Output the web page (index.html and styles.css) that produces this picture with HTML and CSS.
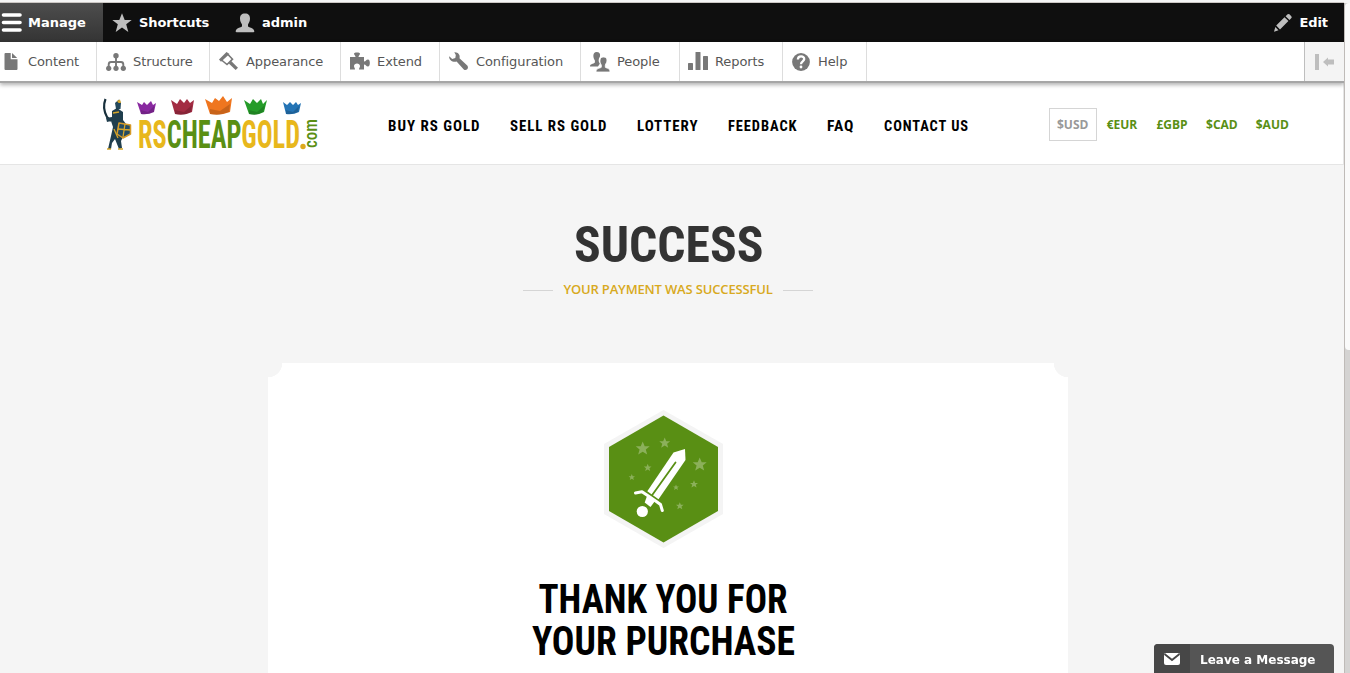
FILE: index.html
```html
<!DOCTYPE html>
<html lang="en">
<head>
<meta charset="utf-8">
<title>Success | RSCheapGold</title>
<link rel="stylesheet" href="styles.css">
</head>
<body>
<div class="window">
<div class="page">
  <nav class="toolbar">
    <a class="tab tab-manage"><svg width="20" height="20" fill="none" stroke="#fff" stroke-linecap="round"><path d="M2.500 2H19M2.500 9.500H19M2.500 17H19" stroke-width="3.600"/></svg>Manage</a>
    <a class="tab tab-shortcuts"><svg width="20" height="20" fill="#bebebe"><path d="M10 .3 12.700 7H19.700L14.200 11.300 16.300 19 10 14.600 3.700 19 5.800 11.300.3 7H7.300Z"/></svg>Shortcuts</a>
    <a class="tab tab-admin"><svg width="20" height="20" fill="#bebebe"><path d="M10 .5C13.500.5 15 2.500 15 5.500 15 8.500 13.800 9.500 13 11.500V13.500C15.500 15 19 15 19.300 18.500 19.200 19.200 18.500 19.200 18.500 19.200H1.500S.8 19.200.7 18.500C1 15 4.500 15 7 13.500V11.500C6.200 9.500 5 8.500 5 5.500 5 2.500 6.500.5 10 .5Z"/></svg>admin</a>
    <a class="tab tab-edit"><svg width="20" height="20" fill="#bebebe"><path d="M1 18.700 2.300 14 5.500 17.300ZM3.200 12.500 11.500 4.200 15.400 8.100 7 16.400ZM12.600 3.200 14.600 1.300Q15.500.5 16.400 1.300L18.300 3.200Q19.200 4.100 18.400 5L16.500 7.100Z"/></svg>Edit</a>
  </nav>
  <nav class="tray">
    <a class="item item-content"><svg width="20" height="20" fill="#787878"><path d="M4.500 1H9.700V7.300H16.500V16.700Q16.500 18 15.500 18H4.500Q3.500 18 3.500 17V2Q3.500 1 4.500 1ZM11 1 16.200 6H11Z"/></svg>Content</a>
    <a class="item item-structure"><svg width="20" height="20" fill="#787878"><circle cx="10" cy="3.800" r="2.700"/><circle cx="2.700" cy="16.300" r="2.600"/><circle cx="10" cy="16.300" r="2.600"/><circle cx="17.300" cy="16.300" r="2.600"/><path d="M10 4V16M2.700 16V12.500Q2.700 10 5 10H15Q17.300 10 17.300 12.500V16" fill="none" stroke="#787878" stroke-width="1.900"/></svg>Structure</a>
    <a class="item item-appearance"><svg width="20" height="20" fill="#787878"><path d="M7.500 0 10.500 2 2 9.800 0 7.500Z"/><path d="M9 2.500 13.500 7.200 8 12.500 2.500 8" fill="none" stroke="#787878" stroke-width="1.600"/><path d="M11 10.300 17.800 16.900" stroke="#787878" stroke-width="3.400"/></svg>Appearance</a>
    <a class="item item-extend"><svg width="20" height="20" fill="#787878"><path d="M0 5H5.500C5.500 3.500 4 3 4 1.500 4 0 10 0 10 1.500 10 3 8.500 3.500 8.500 5H14V9.500C16 9.500 16 7.500 18 7.500 20.500 7.500 20.500 14.500 18 14.500 16 14.500 16 12.500 14 12.500V17.500H9C9 16 10 15.500 10 14 10 10.500 4 10.500 4 14 4 15.500 5 16 5 17.500H0Z"/></svg>Extend</a>
    <a class="item item-configuration"><svg width="20" height="20"><path d="M5.300.2C9-.2 11.500 3 10.500 6.300L18.500 13.800Q19.500 15 18.500 17 16.600 18.800 14.800 17.500L7.600 9.600C4 10.500-.3 8.500.2 4.300L3.200 6.900 6.300 6 6.800 3Z" fill="#787878"/></svg>Configuration</a>
    <a class="item item-people"><svg width="20" height="20" fill="#787878"><path d="M6.500 0C9.500 0 10.500 1.600 10 4.300 9.700 5.700 8.700 6 8.700 9.300L9.800 11.800 8 14.500H0C0 11.500 3.500 12.300 4.900 10.500V8.500C2.800 5.500 2.500 0 6.500 0Z"/><path d="M13.300 5C17 5 17.500 8 16.500 10.500L15.300 13V15.300C17 16.500 20 16 20 20H6C6 16 9.500 16.500 11.300 15.300V13C9.500 10.500 9 5 13.300 5Z" stroke="#fff" stroke-width=".8"/></svg>People</a>
    <a class="item item-reports"><svg width="20" height="20" fill="#787878"><rect y="11" width="5" height="7" rx=".6"/><rect x="7.500" width="5" height="18" rx=".6"/><rect x="15" y="4" width="5" height="14" rx=".6"/></svg>Reports</a>
    <a class="item item-help"><svg width="20" height="20"><circle cx="10" cy="10" r="8.900" fill="#787878"/><path d="M6.900 7.500C6.900 3.400 13.500 3.500 13.200 7.200 13 9.500 10 9.300 10 12.300" fill="none" stroke="#fff" stroke-width="2.300"/><circle cx="10" cy="15" r="1.400" fill="#fff"/></svg>Help</a>
    <a class="orient"><svg width="20" height="16" fill="#bebebe"><path d="M0 0H4V16H0ZM8 8 13 3.500V5.500H19V10.500H13V12.500Z"/></svg></a>
  </nav>

  <header class="header">
    <svg class="logo" width="220" height="60" viewBox="100 94 220 60">
      <g stroke-linejoin="round">
        <path d="M105.500 99Q102 108 107 117L111 121" fill="none" stroke="#18303c" stroke-width="2.200"/>
        <path d="M115 103 119 99.500 121 103 120.500 109 116 109Z" fill="#24485b"/>
        <path d="M117 101 120 99.500 121 103 118.500 103Z" fill="#d6a62a"/>
        <path d="M112 111 117 108 123 112 123 120 126 124 123 130 123 137 121 141 122 148 119 149 115 139 112 143 111 149 108 149 111 136 113 127 111 121 107 122 106 118 112 117Z" fill="#203e4d"/>
        <path d="M119 123 130.500 125 130.500 134 123 138 117 134Z" fill="#244c63" stroke="#d69b29" stroke-width="1.500"/>
        <path d="M118 129 130 130M125 124 123 137M113 113 119 112M114 129 118 138M107 149H111M118 149H123" fill="none" stroke="#d6a62a" stroke-width="1.300"/>
      </g>
      <path d="M137 102 142 105 144 102 147 105 151 101 153 105 156 103 154 112Q148 115 141 114Z" fill="#8929a0"/>
      <path d="M171 100 177 104 180 99 184 103 187 99 190 103 194 100 192 112Q184 116 175 114Z" fill="#a32c43"/>
      <path d="M205 99 212 103 215 98 219 101 223 96 227 102 232 98 230 112Q220 116 210 114Z" fill="#ef761f"/>
      <path d="M244 100 250 104 253 99 257 103 261 99 263 104 267 100 264 112Q257 116 249 114Z" fill="#259c29"/>
      <path d="M283 102 287 105 290 102 293 105 296 102 298 105 301 103 299 112Q293 115 286 114Z" fill="#2474b5"/>
      <path d="M141 110 148 112 154 106 154 112Q147 115 141 114ZM175 110 184 112 192 105 191 112 184 115 175 114ZM210 109 220 111 230 104 229 112 219 115 210 114ZM249 110 257 112 265 105 263 112 256 115 249 114ZM286 110 293 112 299 106 298 112 292 114 286 114Z" fill="#000" opacity=".16"/>
      <text class="logo-text" x="138" y="147.500" textLength="162" lengthAdjust="spacingAndGlyphs"><tspan class="gold">RS</tspan><tspan class="green">CHEAP</tspan><tspan class="gold">GOLD</tspan></text>
      <circle cx="303" cy="146.500" r="2.700" fill="#dda91b"/>
      <text class="logo-com" transform="translate(317 148) rotate(-90)" textLength="29" lengthAdjust="spacingAndGlyphs">com</text>
    </svg>
    <nav class="menu">
      <svg width="92" height="20"><text y="16" textLength="92.500" lengthAdjust="spacingAndGlyphs">BUY RS GOLD</text></svg>
      <svg width="97" height="20"><text y="16" textLength="97.500" lengthAdjust="spacingAndGlyphs">SELL RS GOLD</text></svg>
      <svg width="61" height="20"><text y="16" textLength="61.500" lengthAdjust="spacingAndGlyphs">LOTTERY</text></svg>
      <svg width="69" height="20"><text y="16" textLength="69.500" lengthAdjust="spacingAndGlyphs">FEEDBACK</text></svg>
      <svg width="27" height="20"><text y="16" textLength="27.500" lengthAdjust="spacingAndGlyphs">FAQ</text></svg>
      <svg width="85" height="20"><text y="16" textLength="85" lengthAdjust="spacingAndGlyphs">CONTACT US</text></svg>
    </nav>
    <div class="currencies">
      <a class="currency active">$USD</a><a class="currency">€EUR</a><a class="currency">£GBP</a><a class="currency">$CAD</a><a class="currency">$AUD</a>
    </div>
  </header>

  <main class="main">
    <svg class="title" width="190" height="50"><text x="0" y="43" textLength="189.500" lengthAdjust="spacingAndGlyphs">SUCCESS</text></svg>
    <p class="subtitle"><span>YOUR PAYMENT WAS SUCCESSFUL</span></p>
    <section class="card">
      <svg class="badge" width="120" height="140" viewBox="603 409 120 140">
        <path d="M663.500 410 723 444V514L663.500 548 604 514V444Z" fill="#f4f4f4"/>
        <path d="M663.500 415.500 718 447V511L663.500 542.500 609 511V447Z" fill="#598f14"/>
        <defs><path id="star" d="M0-7 2-2.300 7-2.200 3.100 1 4.500 6 0 3.300-4.500 6-3.100 1-7-2.200-2-2.300Z"/></defs>
        <g fill="#8bb05a">
          <use href="#star" transform="translate(642.700 448.500)"/>
          <use href="#star" transform="translate(664.700 443) scale(.78)"/>
          <use href="#star" transform="translate(699.700 464.500)"/>
          <use href="#star" transform="translate(647.700 467.700) scale(.55)"/>
          <use href="#star" transform="translate(631.800 477.200) scale(.45)"/>
          <use href="#star" transform="translate(676 487.400) scale(.42)"/>
          <use href="#star" transform="translate(694 484.200) scale(.57)"/>
          <use href="#star" transform="translate(679.800 506) scale(.55)"/>
        </g>
        <path d="M685 449 673.500 452.500 647.300 491.300 658.500 499.300 685.500 460Z" fill="#fff"/>
        <path d="M675.500 462.500 651.500 496" stroke="#598f14" stroke-width="1.800" stroke-linecap="round"/>
        <path d="M635.500 493 642 491.700 648 495.800 656 501.200 660.500 504.500 662.300 510.500" fill="none" stroke="#fff" stroke-width="3" stroke-linecap="round" stroke-linejoin="round"/>
        <path d="M647 496 644.700 502.500 650.500 507 655 501Z" fill="#fff"/>
        <circle cx="642.300" cy="511.500" r="5.600" fill="#fff"/>
      </svg>
      <svg class="thanks" width="266" height="90"><text x="8.500" y="35" textLength="249" lengthAdjust="spacingAndGlyphs">THANK YOU FOR</text><text x="2" y="77" textLength="263" lengthAdjust="spacingAndGlyphs">YOUR PURCHASE</text></svg>
    </section>
  </main>
</div>
<div class="scrollbar"><div class="thumb"></div></div>
</div>
<div class="chat"><span class="chat-icon"><svg width="16" height="12"><rect width="16" height="12" rx="2" fill="#fff"/><path d="M.5 1 8 7 15.500 1" fill="none" stroke="#474747" stroke-width="1.900"/></svg></span><span class="chat-label">Leave a Message</span></div>
</body>
</html>
```
FILE: styles.css
```css
* { box-sizing: border-box; }
body { margin: 0; height: 673px; overflow: hidden; background: #f5f5f5; font-family: "DejaVu Sans", sans-serif; font-size: 13px; }
svg { display: block; flex: none; overflow: visible; }
.window { display: flex; height: 673px; padding-top: 2px; }
.page { width: 1344px; height: 671px; border-top: 1px solid #cbc7c4; overflow: hidden; }

.toolbar { display: flex; height: 39px; background: #0f0f0f; color: #fff; font-weight: bold; }
.tab { display: flex; align-items: center; gap: 7px; height: 39px; }
.tab-manage { width: 103px; padding-left: 1px; background: linear-gradient(#4d4d4d, #343434); }
.tab-shortcuts { width: 123px; padding-left: 9px; letter-spacing: -.1px; }
.tab-admin { padding-left: 9px; }
.tab-edit { margin-left: auto; padding-right: 16px; letter-spacing: -.1px; }

.tray { position: relative; display: flex; height: 41px; background: #fff; border-bottom: 2px solid #a6a6a6; box-shadow: 0 2px 4px rgba(0, 0, 0, .3); color: #565656; letter-spacing: -.08px; }
.item { display: flex; align-items: center; gap: 7px; padding-left: 9px; border-right: 1px solid #ddd; white-space: nowrap; }
.item-content { width: 97px; padding-left: 1px; }
.item-structure { width: 113px; }
.item-appearance { width: 131px; }
.item-extend { width: 99px; }
.item-configuration { width: 141px; }
.item-people { width: 99px; }
.item-reports { width: 103px; padding-left: 8px; }
.item-help { width: 84px; padding-left: 8px; }
.orient { display: flex; align-items: center; width: 40px; margin-left: auto; padding-left: 10px; background: #f4f4f4; border-left: 1px solid #bebebe; }

.header { display: flex; height: 82px; padding-left: 100px; background: #fff; border-bottom: 1px solid #e5e5e5; border-right: 1px solid #e5e5e5; }
.logo { margin-top: 11px; }
.logo-text { font: bold 38px "Roboto Condensed", Roboto, sans-serif; }
.gold { fill: #e8b71c; }
.green { fill: #5a8f14; }
.logo-com { font: 500 18px "Roboto Condensed", Roboto, sans-serif; fill: #5a8f14; }
.menu { display: flex; gap: 30px; margin: 32px 0 0 68px; font: bold 15.500px "Roboto Condensed", Roboto, sans-serif; letter-spacing: 1px; }
.currencies { display: flex; gap: 1.700px; margin: 25px 0 0 80px; }
.currency { width: 48px; height: 33px; padding: 0 7px; border: 1px solid transparent; color: #598f14; font: bold 12px/31px "Open Sans", sans-serif; }
.currency.active { border-color: #d5d5d5; color: #999; }

.main { display: flex; flex-direction: column; align-items: center; padding-top: 54px; }
.title { margin-right: 7px; font: bold 50px "Roboto Condensed", Roboto, sans-serif; fill: #333; }
.subtitle { display: flex; align-items: center; gap: 10px; margin: 10px 8px 0 0; height: 20px; color: #d8a920; font: 600 13px/20px "Open Sans", sans-serif; letter-spacing: -.16px; white-space: nowrap; }
.subtitle::before, .subtitle::after { content: ""; width: 30px; height: 1px; margin-top: 2px; background: #d5d5d5; }
.card { display: flex; flex-direction: column; align-items: center; width: 800px; height: 400px; margin: 64px 8px 0 0; padding: 46px 10px 0 0; background: radial-gradient(circle at 0 0, #f5f5f5 14px, #fff 14.500px) left / 50% 100% no-repeat, radial-gradient(circle at 100% 0, #f5f5f5 14px, #fff 14.500px) right / 50% 100% no-repeat; }
.thanks { margin-top: 29px; font: bold 40px "Roboto Condensed", Roboto, sans-serif; fill: #000; }

.scrollbar { width: 6px; height: 671px; margin-top: 1px; background: #d4d3d2; border-left: 1px solid #bfbbb8; }
.thumb { height: 347px; background: #fafafa; border-radius: 4px 0 0 4px; }
.chat { position: fixed; left: 1154px; bottom: 0; display: flex; width: 180px; height: 29px; border-radius: 4px 4px 0 0; overflow: hidden; background: #555; color: #fff; font-weight: bold; font-size: 12px; }
.chat-icon { display: flex; align-items: center; justify-content: center; width: 36px; background: #474747; }
.chat-label { padding-left: 10px; line-height: 32px; white-space: nowrap; }
```
